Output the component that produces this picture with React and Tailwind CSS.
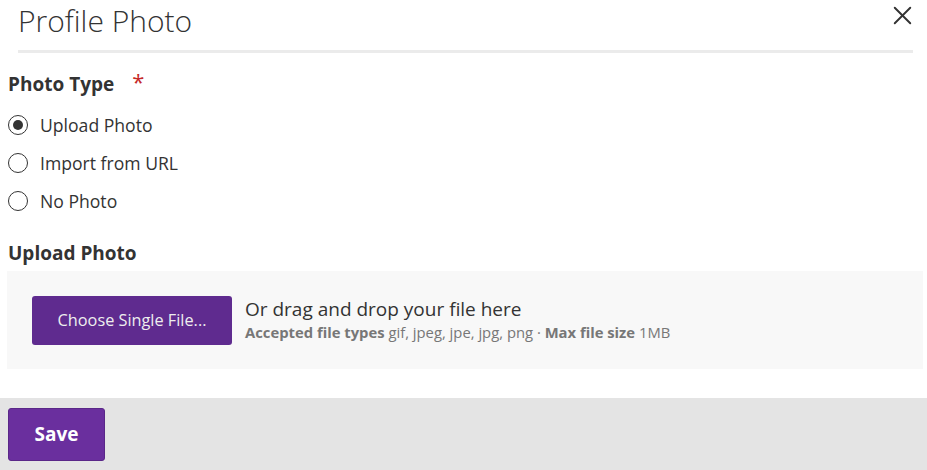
import { X } from 'lucide-react';

const options = ['Upload Photo', 'Import from URL', 'No Photo'];

const Radio = ({ label, checked }) => (
    <label className="flex items-center h-[38px] cursor-pointer">
        <span className="w-5 h-5 rounded-full border-[1.5px] border-[#333] flex items-center justify-center">
            {checked && <span className="w-[10px] h-[10px] rounded-full bg-[#333]"></span>}
        </span>
        <span className="ml-3 text-[17.6px] text-[#333]">{label}</span>
    </label>
);

const App = () => {
    return (
        <div className="w-[927px] h-[470px] bg-white flex flex-col text-[#333] overflow-hidden" style={{ fontFamily: '"Open Sans", sans-serif' }}>
            <div className="flex-1 flex flex-col">
                <div className="ml-[18px] mr-[14px] border-b-[3px] border-[#ebebeb] pb-[9px] flex items-start justify-between">
                    <h1 className="text-[30px] font-light leading-[41px] text-[#333]">Profile Photo</h1>
                    <button className="-mr-[5px] text-[#333]">
                        <X size={31} strokeWidth={1.5} />
                    </button>
                </div>

                <div className="px-2 pt-[17px]">
                    <div className="flex items-center text-[19px] font-bold leading-[28px]">
                        Photo Type
                        <span className="ml-[18px] text-[#c62828] font-normal text-[22px] leading-none -mt-[6px]">*</span>
                    </div>
                    <div className="mt-[8px] flex flex-col">
                        {options.map((o, i) => (
                            <Radio key={o} label={o} checked={i === 0} />
                        ))}
                    </div>

                    <div className="mt-[19px] text-[19px] font-bold leading-[28px]">Upload Photo</div>
                    <div className="mt-[4px] bg-[#f8f8f8] h-[98px] flex items-center pl-[25px] -ml-[1px] -mr-[4px]">
                        <button className="w-[200px] h-[49px] bg-[#5f2b8f] rounded-[3px] text-[#eee] text-[16.3px]">
                            Choose Single File...
                        </button>
                        <div className="ml-[13px] flex flex-col">
                            <span className="text-[19px] leading-[24px] text-[#333]">Or drag and drop your file here</span>
                            <span className="text-[14.8px] leading-[22px] text-[#777]">
                                <b>Accepted file types</b> gif, jpeg, jpe, jpg, png · <b>Max file size</b> 1MB
                            </span>
                        </div>
                    </div>
                </div>
            </div>

            <div className="h-[72px] bg-[#e4e4e4] px-2 pt-[10px]">
                <button className="w-[97px] h-[53px] bg-[#6a2f9e] rounded-[3px] text-white text-[19px] font-bold border border-[#5a2788]">
                    Save
                </button>
            </div>
        </div>
    );
};

export default App;
